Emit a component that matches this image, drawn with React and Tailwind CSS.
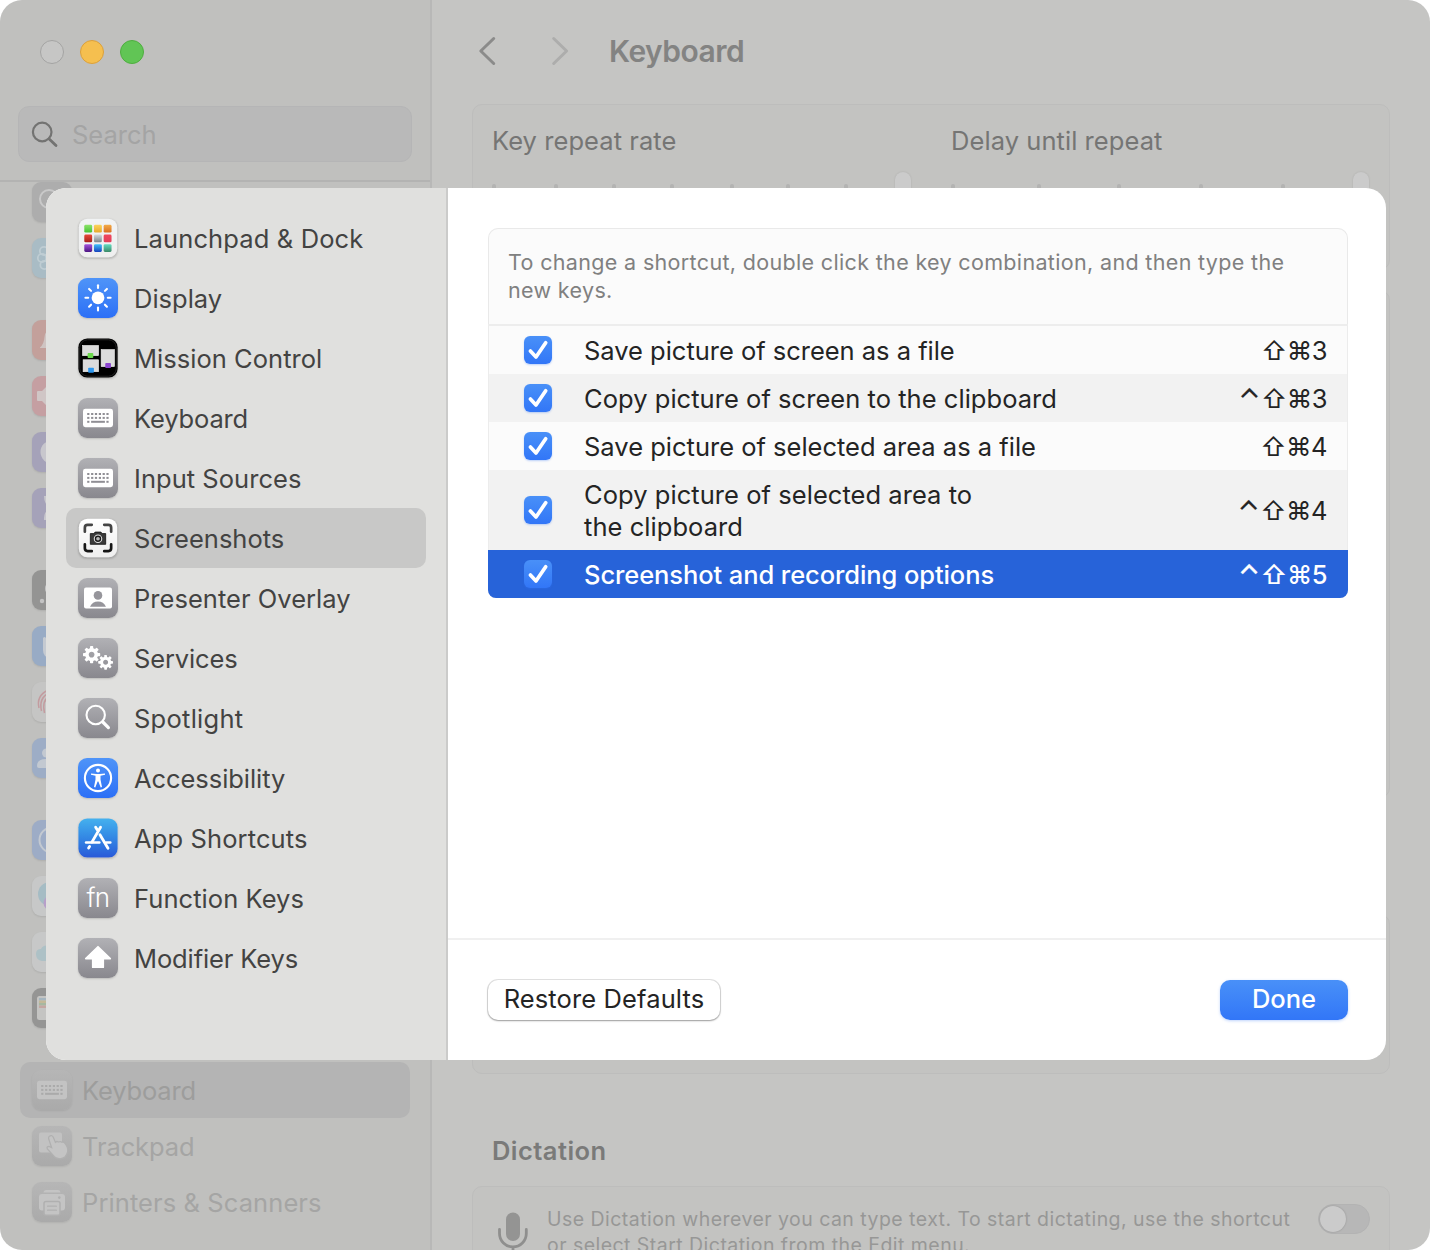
function Gear({ cx, cy, s }) {
  return (
    <g transform={`translate(${cx} ${cy}) scale(${s})`}>
      {[0, 45, 90, 135, 180, 225, 270, 315].map((a) => (
        <rect key={a} x="-1.6" y="-8.6" width="3.2" height="4" rx="0.7" fill="#fff" transform={`rotate(${a})`} />
      ))}
      <circle r="4.7" fill="none" stroke="#fff" strokeWidth="3.6" />
    </g>
  );
}

function KeyboardGlyph({ plate, ink }) {
  return (
    <g>
      <rect x="5" y="10.8" width="30" height="18.4" rx="2.4" fill={plate} />
      <g fill={ink}>
        {[10.3, 14.2, 18, 21.9, 25.7, 29.5].map((x) => (
          <g key={x}>
            <rect x={x - 1.1} y="15" width="2.2" height="2" />
            <rect x={x - 1.1} y="18.9" width="2.2" height="2" />
          </g>
        ))}
        <rect x="9.2" y="22.8" width="2.2" height="2" />
        <rect x="13.1" y="22.8" width="13.8" height="2" />
        <rect x="28.4" y="22.8" width="2.2" height="2" />
      </g>
    </g>
  );
}

const pads = [
  ["#8be36a", "#45c234"], ["#fbd45c", "#e8a92b"], ["#f2ab48", "#d96f22"],
  ["#e8493a", "#a82019"], ["#d4dadd", "#7c8488"], ["#f0485c", "#e23e5a"],
  ["#a452dc", "#4d1583"], ["#3fc2fb", "#1844bd"], ["#63dcc0", "#3c8a68"],
];

const glyphs = {
  launchpad: (
    <g>
      {pads.map(([a, b], i) => (
        <g key={a}>
          <linearGradient id={`pad${i}`} x1="0" y1="0" x2="0" y2="1">
            <stop offset="0" stopColor={a} />
            <stop offset="1" stopColor={b} />
          </linearGradient>
          <rect x={5.7 + (i % 3) * 10.1} y={6.3 + Math.floor(i / 3) * 10.1} width="8.2" height="8" rx="1.4" fill={`url(#pad${i})`} />
        </g>
      ))}
    </g>
  ),
  display: (
    <g>
      <circle cx="20" cy="19.8" r="6.4" fill="#fff" />
      {[0, 45, 90, 135, 180, 225, 270, 315].map((a) => (
        <line key={a} x1="20" y1="10" x2="20" y2="7.2" stroke="#fff" strokeWidth="2.1" strokeLinecap="round" transform={`rotate(${a} 20 19.8)`} />
      ))}
    </g>
  ),
  mission: (
    <g>
      <rect x="1.4" y="1.4" width="37.2" height="37.2" rx="8" fill="none" stroke="#2c2c2c" strokeWidth="0.8" />
      <g fill="#dcdcdc" stroke="#f4f4f4" strokeWidth="0.6">
        <rect x="4.2" y="7.2" width="16.4" height="10.4" />
        <rect x="4.8" y="21.8" width="15.8" height="12.2" />
        <rect x="23.2" y="11.4" width="13.6" height="17.4" />
      </g>
      <rect x="9.4" y="15" width="5.8" height="5" rx="0.8" fill="#6bd84c" />
      <rect x="10" y="30" width="5.8" height="5" rx="0.8" fill="#2e97ee" />
      <rect x="27.4" y="25.2" width="5.8" height="5" rx="0.8" fill="#8b45cf" />
    </g>
  ),
  keyboard: <KeyboardGlyph plate="#ffffff" ink="#8f8e94" />,
  screenshots: (
    <g fill="none" strokeWidth="2.8">
      <g stroke="#444" strokeLinecap="round">
        <path d="M6.3 13.5V9.2Q6.3 6.3 9.2 6.3H13.5" />
        <path d="M33.7 13.5V9.2Q33.7 6.3 30.8 6.3H26.5" />
      </g>
      <g stroke="#161616" strokeLinecap="round">
        <path d="M6.3 26.5V30.8Q6.3 33.7 9.2 33.7H13.5" />
        <path d="M33.7 26.5V30.8Q33.7 33.7 30.8 33.7H26.5" />
      </g>
      <path d="M12 15.4H15.6L17 13.8H23L24.4 15.4H28V26.6H12Z" fill="#3a3a3a" stroke="#0d0d0d" strokeWidth="0.8" />
      <circle cx="20" cy="20.8" r="3.9" fill="#1a1a1a" stroke="#e4e4e4" strokeWidth="1.1" />
      <circle cx="20" cy="20.8" r="1.9" fill="#b5b5b5" />
    </g>
  ),
  presenter: (
    <g>
      <rect x="6" y="9.4" width="28" height="21" rx="2" fill="#fff" />
      <circle cx="20" cy="17.4" r="4.3" fill="#96959b" />
      <path d="M12 28.8Q14.4 23.6 20 23.6T28 28.8Z" fill="#96959b" />
    </g>
  ),
  services: (
    <g>
      <Gear cx={13.6} cy={16.6} s={1} />
      <Gear cx={27.6} cy={24.3} s={0.86} />
    </g>
  ),
  spotlight: (
    <g fill="none" stroke="#fff" strokeLinecap="round">
      <circle cx="17.7" cy="17" r="9.2" strokeWidth="2.1" />
      <path d="M24.8 24L30.4 29.6" strokeWidth="3.2" />
    </g>
  ),
  accessibility: (
    <g>
      <circle cx="20" cy="20" r="13.1" fill="none" stroke="#fff" strokeWidth="2.1" />
      <circle cx="20" cy="12.6" r="2" fill="#fff" />
      <path d="M13 15.4L18.2 16.1H21.8L27 15.4V16.7L22.5 17.7V21.4L24 29L22.7 29.4L20.4 23.4H19.6L17.3 29.4L16 29L17.5 21.4V17.7L13 16.7Z" fill="#fff" />
    </g>
  ),
  appstore: (
    <g fill="none" stroke="#fff" strokeWidth="2.9" strokeLinecap="round">
      <path d="M22.6 9L13.8 24.2" />
      <path d="M17.6 9L19.2 11.6" />
      <path d="M22 16.6L30.2 30.4" />
      <path d="M7.8 24.5H21.4" strokeWidth="2.5" />
      <path d="M28.4 24.5H32.6" strokeWidth="2.5" />
      <path d="M11.4 28.6L10.4 30.2" />
    </g>
  ),
  modifier: (
    <path d="M20 8.8L32.2 20.6H25.2V29.2H14.8V20.6H7.8Z" fill="#fff" stroke="#fff" strokeWidth="1.8" strokeLinejoin="round" />
  ),
};

const gray = "bg-linear-to-b from-[#b1b1b5] to-[#89888e]";
const blue = "bg-linear-to-b from-[#4f94f8] to-[#2c6ff6]";

const panes = [
  ["Launchpad & Dock", "launchpad", "bg-linear-to-b from-[#f1f3f4] to-[#efefef] scale-[0.96]", "tracking-[0.13px]"],
  ["Display", "display", blue, "tracking-[0px]"],
  ["Mission Control", "mission", "bg-black scale-[0.98]", "tracking-[0.03px]"],
  ["Keyboard", "keyboard", gray, "tracking-[-0.14px]"],
  ["Input Sources", "keyboard", gray, "tracking-[0.04px]"],
  ["Screenshots", "screenshots", "bg-linear-to-b from-white to-[#efefef] scale-[0.96]", "tracking-[0px]"],
  ["Presenter Overlay", "presenter", gray, "tracking-[0.03px]"],
  ["Services", "services", gray, "tracking-[-0.13px]"],
  ["Spotlight", "spotlight", gray, "tracking-[0.26px]"],
  ["Accessibility", "accessibility", blue, "tracking-[-0.06px]"],
  ["App Shortcuts", "appstore", "bg-linear-to-b from-[#45b1ee] to-[#2a59d8] scale-[0.98]", "tracking-[0.12px]"],
  ["Function Keys", "fn", gray, "tracking-[0.06px]"],
  ["Modifier Keys", "modifier", gray, "tracking-[-0.12px]"],
];

const shortcuts = [
  ["Save picture of screen as a file", false, "3", "bg-[#fbfbfb]", "tracking-[-0.02px]"],
  ["Copy picture of screen to the clipboard", true, "3", "bg-[#f2f2f2]", "tracking-[0.04px]"],
  ["Save picture of selected area as a file", false, "4", "bg-[#fbfbfb]", "tracking-[0px]"],
  ["Copy picture of selected area to the clipboard", true, "4", "bg-[#f2f2f2]", "tracking-[0.05px]"],
  ["Screenshot and recording options", true, "5", "bg-[#2763d9] text-white font-medium", "tracking-[-0.09px]"],
];

const dimmed = [
  [
    ["bg-[#adadad]", <circle cx="17" cy="17" r="9" fill="none" stroke="#c9c9c9" strokeWidth="2" />],
    ["bg-[#a9bcc5]", (
      <g fill="none" stroke="#bfcdd3" strokeWidth="1.8">
        <circle cx="12" cy="13" r="4.2" />
        <circle cx="10" cy="20" r="4.2" />
        <circle cx="12.5" cy="27" r="4.2" />
      </g>
    )],
  ],
  [
    ["bg-[#c3a09b]", <path d="M8 27.5Q12 24 12.5 17Q13 10 20 9V28H9Q7.5 28 8 27.5Z" fill="#cfc4c2" />],
    ["bg-[#c59fa2]", <path d="M5 16Q5 15 6 15H10L16 9V31L10 25H6Q5 25 5 24Z" fill="#d0c6c6" />],
    ["bg-[#a5a2b9]", <circle cx="20" cy="20" r="11.5" fill="#c8c7cd" />],
    ["bg-[#a5a2b9]", <path d="M12 8H28V10Q27 16 21 20Q27 24 28 32H12V30Q12 24 18 20Q12 16 12 8Z" fill="#c8c7cd" />],
  ],
  [
    ["bg-[#949493]", (
      <g fill="#c3c3c3">
        <circle cx="10" cy="31" r="2.2" />
        <rect x="13" y="14" width="14" height="9" rx="4" />
      </g>
    )],
    ["bg-[#98abc5]", <path d="M11 12Q12.5 10 14 12V27H18V32Q11 31 11 24Z" fill="#c5cad1" />],
    ["bg-[#c5c5c4]", (
      <g fill="none" stroke="#c39b9f" strokeWidth="1.5">
        <path d="M7 26Q4 14 16 8" />
        <path d="M9.5 29Q6.5 16 17 11" />
        <path d="M12.5 31Q9.5 18 18 14" />
      </g>
    )],
    ["bg-[#9dadc6]", (
      <g fill="#c3c9d1">
        <circle cx="14.5" cy="15" r="4.5" />
        <path d="M5 28Q5 21 14 21H20V30H7Q5 30 5 28Z" />
      </g>
    )],
  ],
  [
    ["bg-[#9dacc6]", <circle cx="20" cy="20" r="12.5" fill="none" stroke="#c3c9d1" strokeWidth="2" />],
    ["bg-[#c7c8c8]", (
      <g>
        <circle cx="18" cy="18" r="12" fill="#a5bcc4" />
        <circle cx="19" cy="27" r="7.5" fill="#b79fc9" />
      </g>
    )],
    ["bg-[#c7c8c8]", <path d="M4 22Q4 17 9 17Q11 12 18 14V29H10Q4 28 4 22Z" fill="#adc1c6" />],
    ["bg-[#959594]", (
      <g>
        <rect x="5" y="8" width="20" height="24" rx="2.5" fill="#c4c4c2" />
        <rect x="7" y="10" width="12" height="2.5" fill="#a5b5bf" />
        <rect x="7" y="12.5" width="12" height="2.5" fill="#c3b898" />
        <rect x="7" y="15" width="12" height="2.5" fill="#a7b8a0" />
        <rect x="7" y="17.5" width="12" height="2.5" fill="#c4a7a2" />
      </g>
    )],
  ],
];

const devices = [
  ["Keyboard", <KeyboardGlyph plate="#c3c3c3" ink="#aaaaaa" />, "bg-[#b4b4b4] text-[#9d9d9c]", "tracking-[-0.16px]"],
  ["Trackpad", (
    <g>
      <rect x="7" y="6.4" width="23" height="20" rx="2" fill="#c2c2c2" />
      <path d="M17.4 10.2Q20.2 8.6 21.4 11.6L23.4 16.4Q24.8 14.8 26.4 16Q28.6 15 29.6 16.2Q32 15.4 33 17.4Q36.6 22 35.6 26Q34 32.6 28 32.8Q23.6 32.8 21 29.2L15.4 23Q14.2 20.6 17 20.4L19.6 21.6L16.6 12.6Q16.4 10.8 17.4 10.2Z" fill="#c4c4c4" stroke="#b0b0b0" strokeWidth="1.3" />
    </g>
  ), "text-[#a5a5a4]", "tracking-[-0.1px]"],
  ["Printers & Scanners", (
    <g>
      <path d="M11.4 10.6Q11.6 8 14 8H26Q28.4 8 28.6 10.6Z" fill="#c4c4c4" />
      <rect x="7" y="12" width="26" height="16.5" rx="3" fill="#c4c4c4" />
      <circle cx="27.3" cy="15.6" r="1.3" fill="#b0b0b0" />
      <rect x="12" y="19.6" width="16" height="13.6" rx="2" fill="#c4c4c4" stroke="#b0b0b0" strokeWidth="1.5" />
      <path d="M15.6 24.2H24.4M15.6 28.2H24.4" stroke="#b0b0b0" strokeWidth="1.2" strokeLinecap="round" />
    </g>
  ), "text-[#a5a5a4]", "tracking-[0.09px]"],
];

function Art({ children }) {
  return <svg viewBox="0 0 40 40" className="size-10">{children}</svg>;
}

function SettingsSidebar() {
  return (
    <aside className="flex w-[432px] shrink-0 flex-col border-r-2 border-[#b8b8b7] bg-[#c0c0be]">
      <div className="h-[182px] shrink-0 border-b-2 border-[#b3b3b2] px-[18px] pt-10">
        <div className="flex gap-4 pl-[22px]">
          <span className="size-6 rounded-full border border-[#a4a4a3] bg-[#c6c6c5]" />
          <span className="size-6 rounded-full border border-[#dba03c] bg-[#f5bf4f]" />
          <span className="size-6 rounded-full border border-[#4fae40] bg-[#61c555]" />
        </div>
        <div className="mt-[42px] flex h-14 w-[394px] items-center rounded-[11px] border border-[#b5b5b6] bg-[#b9b9b9] pl-[12px]">
          <svg viewBox="0 0 28 28" className="size-7" fill="none" stroke="#737372" strokeLinecap="round">
            <circle cx="11.2" cy="12" r="9.3" strokeWidth="2.2" />
            <path d="M18.2 19L25 25.6" strokeWidth="2.8" />
          </svg>
          <span className="pt-[3px] pl-[13px] text-[25.5px] text-[#a4a4a4]">Search</span>
        </div>
      </div>
      <div className="flex min-h-0 flex-1 flex-col overflow-hidden">
        <div className="flex flex-col gap-[42px] pl-8">
          {dimmed.map((group, i) => (
            <div key={i} className="flex flex-col gap-4">
              {group.map(([bg, art], j) => (
                <div key={j} className={`size-10 overflow-hidden rounded-[9px] shadow-[0_1px_2px_#00000018] ${bg}`}>
                  <Art>{art}</Art>
                </div>
              ))}
            </div>
          ))}
        </div>
        <div className="mt-[34px] flex flex-col px-5">
          {devices.map(([name, art, cls, track]) => (
            <div key={name} className={`flex h-14 w-[390px] items-center rounded-[10px] pl-3 ${cls}`}>
              <div className="size-10 rounded-[9px] bg-linear-to-b from-[#b6b6b6] to-[#aaaaaa] shadow-[0_1px_2px_#00000014]">
                <Art>{art}</Art>
              </div>
              <span className={`pt-[2px] pl-[10px] text-[25.5px] ${track}`}>{name}</span>
            </div>
          ))}
        </div>
      </div>
    </aside>
  );
}

function Slider({ label, width, ticks, track }) {
  return (
    <div className={width}>
      <div className={`text-[25.5px] leading-8 text-[#757574] ${track}`}>{label}</div>
      <div className="mt-[15px] flex h-12 items-start">
        {ticks.map((t, i) => (
          <span key={i} className={`mt-3 h-3 w-1 shrink-0 rounded-full bg-[#b3b3b2] ${t}`} />
        ))}
        <span className="h-11 w-4 shrink-0 rounded-full bg-[#cbcbcb] shadow-[0_0_2px_#00000020]" />
      </div>
    </div>
  );
}

function KeyboardPage() {
  return (
    <main className="flex min-w-0 flex-1 flex-col bg-[#c5c5c3] px-10">
      <header className="flex h-[104px] shrink-0 items-center pl-[6px]">
        <svg viewBox="0 0 92 30" className="h-[30px] w-[92px] -translate-y-px" fill="none" strokeWidth="3" strokeLinecap="round" strokeLinejoin="round">
          <path d="M15.7 2.5L2.8 15L15.7 27.5" stroke="#8b8b8a" />
          <path d="M75.7 2.5L88.6 15L75.7 27.5" stroke="#adadac" />
        </svg>
        <h1 className="pb-[2px] pl-[39px] text-[30px] font-semibold tracking-[-0.5px] text-[#838382]">Keyboard</h1>
      </header>
      <section className="flex h-[166px] shrink-0 rounded-[10px] border border-[#bdbdbc] bg-[#c3c3c1] pt-5 pl-[19px]">
        <Slider label="Key repeat rate" width="w-[459px]" track="tracking-[0.06px]" ticks={["mr-[58px]", "mr-[54px]", "mr-[54px]", "mr-[56px]", "mr-[52px]", "mr-[54px]", "mr-[47px]"]} />
        <Slider label="Delay until repeat" width="w-[430px]" track="tracking-[0.06px]" ticks={["mr-[82px]", "mr-[76px]", "mr-[78px]", "mr-[78px]", "mr-[68px]"]} />
      </section>
      <section className="mt-5 h-[508px] shrink-0 rounded-[10px] border border-[#bdbdbc] bg-[#c3c3c1]" />
      <section className="mt-[116px] h-[160px] shrink-0 rounded-[10px] border border-[#bdbdbc] bg-[#c3c3c1]" />
      <h2 className="mt-[61px] shrink-0 pl-5 text-[25.5px] leading-8 font-semibold tracking-[0.45px] text-[#7a7a79]">Dictation</h2>
      <section className="mt-[19px] flex h-28 shrink-0 items-start rounded-[10px] border border-[#bdbdbc] bg-[#c3c3c1] pt-[18px] pr-[19px] pl-[24px]">
        <svg viewBox="0 0 32 44" className="mt-[7px] h-11 w-8 shrink-0" fill="none" stroke="#8f8f8e">
          <rect x="9" y="0.5" width="14" height="28.5" rx="7" fill="#949493" stroke="none" />
          <path d="M2.5 17.5V21.5A13.4 13.4 0 0 0 29.3 21.5V17.5M16 35V43" strokeWidth="2.8" strokeLinecap="round" />
        </svg>
        <p className="mt-px ml-[18px] flex-1 text-[19.5px] leading-[26px] tracking-[0.46px] text-[#979796]">
          Use Dictation wherever you can type text. To start dictating, use the shortcut
          <br />
          or select Start Dictation from the Edit menu.
        </p>
        <span className="-mt-px flex h-[30px] w-[52px] shrink-0 items-center rounded-full border border-[#b3b3b3] bg-[#b7b7b7]">
          <span className="ml-px size-[26px] rounded-full bg-[#cbcbcb] shadow-[0_0_2px_#00000038]" />
        </span>
      </section>
    </main>
  );
}

function ShortcutsSheet() {
  return (
    <div className="absolute top-[188px] left-[46px] flex h-[872px] w-[1340px] overflow-hidden rounded-[20px] bg-white">
      <nav className="w-[402px] shrink-0 border-r-2 border-[#cbcbca] bg-[#e0e0de] pt-5 pl-5 text-[#434342]">
        {panes.map(([name, icon, bg, track]) => (
          <div key={name} className={`flex h-[60px] w-[360px] items-center rounded-[10px] pl-3 ${name === "Screenshots" ? "bg-[#c8c8c7]" : ""}`}>
            <div className={`flex size-10 items-center justify-center rounded-[9px] shadow-[0_1px_2px_#00000028] ${bg}`}>
              {icon === "fn" ? (
                <span className="text-[26px] leading-10 font-light tracking-[-0.6px] text-white">fn</span>
              ) : (
                <Art>{glyphs[icon]}</Art>
              )}
            </div>
            <span className={`pt-[2px] pl-4 text-[25.5px] ${track}`}>{name}</span>
          </div>
        ))}
      </nav>
      <div className="flex flex-1 flex-col">
        <div className="flex-1 px-10 pt-10">
          <div className="w-[860px] overflow-hidden rounded-[10px] rounded-b-[8px] bg-[#fbfbfb] shadow-[inset_0_0_0_1px_#e9e9e9]">
            <p className="h-[98px] border-b-2 border-[#ededed] pt-5 pl-5 text-[21.5px] leading-7 tracking-[0.34px] text-[#808080]">
              To change a shortcut, double click the key combination, and then type the
              <br />
              new keys.
            </p>
            {shortcuts.map(([name, control, digit, cls, track], i) => (
              <div key={name} className={`flex items-center justify-between text-[25.5px] leading-8 ${i === 3 ? "h-20" : "h-12"} ${cls} ${i === 4 ? "pr-[21px] pl-9" : "border-x border-x-[#ececec] pr-5 pl-[35px] text-[#242424]"}`}>
                <div className="flex items-center">
                  <span className="size-7 rounded-[6px] bg-linear-to-b from-[#4990f8] to-[#3276f7] shadow-[0_1px_2px_#3276f750]">
                    <svg viewBox="0 0 28 28" className="size-7" fill="none" stroke="#fff" strokeWidth="3.7" strokeLinecap="round" strokeLinejoin="round">
                      <path d="M6.4 15L12 21L21.7 6.8" />
                    </svg>
                  </span>
                  <span className={`pt-[2px] pl-8 ${i === 3 ? "w-[452px] whitespace-normal" : "w-[580px]"} ${track}`}>{name}</span>
                </div>
                <span className="flex pt-[2px] tracking-[-0.5px]">
                  {control && <span className="mr-px text-[28px] [-webkit-text-stroke:0.2px_currentColor]">⌃</span>}
                  <span>⇧⌘{digit}</span>
                </span>
              </div>
            ))}
          </div>
        </div>
        <footer className="flex h-[122px] items-start justify-between border-t-2 border-[#f0f0f0] px-10 pt-10 text-[25.5px]">
          <button className="h-10 w-[232px] rounded-[10px] bg-white pb-[2px] tracking-[0.12px] text-[#242424] shadow-[0_0_0_1px_#0000001c,0_1px_2px_#00000050]">Restore Defaults</button>
          <button className="-mr-[2px] h-10 w-32 -translate-x-[2px] rounded-[10px] bg-linear-to-b from-[#4990f8] to-[#3276f7] pb-[2px] font-medium text-white shadow-[0_1px_3px_#3276f750]">Done</button>
        </footer>
      </div>
    </div>
  );
}

export default function App() {
  return (
    <div className="bg-white">
      <div className="relative flex h-[1250px] w-[1430px] overflow-hidden rounded-[22px] font-['Inter',sans-serif] whitespace-nowrap">
        <SettingsSidebar />
        <KeyboardPage />
        <ShortcutsSheet />
      </div>
    </div>
  );
}
